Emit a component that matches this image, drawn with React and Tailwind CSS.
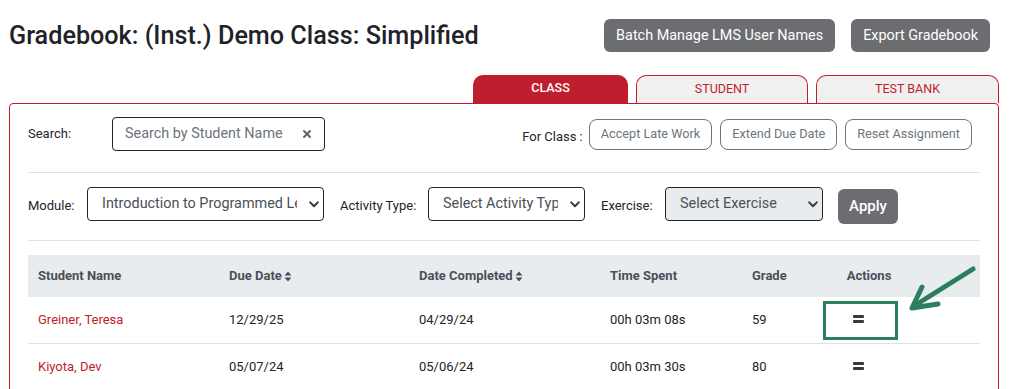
import { X } from "lucide-react";

const Chevron = () => (
  <svg width="10" height="7" viewBox="0 0 10 7" className="shrink-0">
    <path d="M1.2 1.4 L5 5.2 L8.8 1.4" fill="none" stroke="#343a40" strokeWidth="2" strokeLinecap="round" strokeLinejoin="round" />
  </svg>
);

const SortIcon = () => (
  <svg width="8" height="11" viewBox="0 0 8 11" className="ml-[2px] inline-block">
    <path d="M4 0.5 L7.5 4.5 H0.5 Z" fill="#495057" />
    <path d="M4 10.5 L7.5 6.5 H0.5 Z" fill="#495057" />
  </svg>
);

const MenuIcon = () => (
  <div className="flex flex-col gap-[2px]">
    <div className="w-[11px] h-[3px] bg-[#343a40] rounded-[1px]"></div>
    <div className="w-[11px] h-[3px] bg-[#343a40] rounded-[1px]"></div>
  </div>
);

const FakeSelect = ({ text, width, grey }) => (
  <div
    className={`h-[34px] ${width} ${grey ? "bg-[#e9ecef]" : "bg-white"} border border-[#212529] rounded-[4px] flex items-center pl-[14px] pr-[4px] gap-[12px]`}
  >
    <span className="flex-1 overflow-hidden whitespace-nowrap text-[14.4px] text-[#495057]">{text}</span>
    <Chevron />
  </div>
);

const OutlineButton = ({ children }) => (
  <button className="h-[31px] px-[11px] border border-[#6c757d] rounded-[8px] text-[12.7px] text-[#6c757d] bg-white">
    {children}
  </button>
);

const rows = [
  { name: "Greiner, Teresa", due: "12/29/25", done: "04/29/24", time: "00h 03m 08s", grade: "59", boxed: true },
  { name: "Kiyota, Dev", due: "05/07/24", done: "05/06/24", time: "00h 03m 30s", grade: "80" },
];

const cols = "grid grid-cols-[191px_190px_191px_142px_78px_98px_1fr]";

export default function App() {
  return (
    <div className="relative w-[1012px] h-[389px] overflow-hidden bg-white font-['Roboto',sans-serif] text-[#212529]">

      {/* Header */}
      <div className="flex items-center justify-between pl-[9px] pr-[22px] pt-[19px]">
        <h1 className="text-[25.2px] font-medium text-[#1f2329] leading-none">
          Gradebook: (Inst.) Demo Class: Simplified
        </h1>
        <div className="flex gap-[16px]">
          <button className="h-[33px] px-[12px] bg-[#6c6d70] text-white text-[14.4px] rounded-[6px]">
            Batch Manage LMS User Names
          </button>
          <button className="h-[33px] px-[12px] bg-[#6c6d70] text-white text-[14.4px] rounded-[6px]">
            Export Gradebook
          </button>
        </div>
      </div>

      {/* Tabs */}
      <div className="mt-[23px] w-[990px] ml-[9px] flex justify-end gap-[8px]">
        <div className="w-[155px] h-[28px] bg-[#be1e2d] rounded-t-[10px] flex items-center justify-center pb-[1px] text-[12.5px] text-white font-medium">
          CLASS
        </div>
        <div className="w-[172px] h-[28px] bg-[#f0f0f0] border border-b-0 border-[#be1e2d] rounded-t-[10px] flex items-center justify-center pb-[1px] text-[12.5px] text-[#be1e2d]">
          STUDENT
        </div>
        <div className="w-[183px] h-[28px] bg-[#f0f0f0] border border-b-0 border-[#be1e2d] rounded-t-[10px] flex items-center justify-center pb-[1px] text-[12.5px] text-[#be1e2d]">
          TEST BANK
        </div>
      </div>

      {/* Panel */}
      <div className="ml-[9px] w-[990px] border border-[#be1e2d] rounded-t-[4px] px-[18px] pt-[13px] h-[400px]">

        {/* Search row */}
        <div className="flex items-center">
          <span className="w-[84px] text-[13px]">Search:</span>
          <div className="w-[213px] h-[34px] border border-[#212529] rounded-[4px] flex items-center pl-[12px] pr-[11px]">
            <span className="flex-1 text-[14.4px] text-[#6c757d] whitespace-nowrap">Search by Student Name</span>
            <X size={12} strokeWidth={4} color="#5f6368" />
          </div>
          <div className="ml-auto mr-[8px] flex items-center gap-[8px]">
            <span className="text-[13px] mt-[5px] mr-[-2px]">For Class :</span>
            <OutlineButton>Accept Late Work</OutlineButton>
            <OutlineButton>Extend Due Date</OutlineButton>
            <OutlineButton>Reset Assignment</OutlineButton>
          </div>
        </div>

        <div className="mt-[21px] h-px bg-[#dee2e6]"></div>

        {/* Filter row */}
        <div className="mt-[14px] flex items-start">
          <span className="w-[59px] h-[34px] pt-[3px] flex items-center text-[13px]">Module:</span>
          <FakeSelect text="Introduction to Programmed Learning" width="w-[237px]" />
          <span className="ml-[16px] w-[88px] h-[34px] pt-[3px] flex items-center text-[13px] whitespace-nowrap">Activity Type:</span>
          <FakeSelect text="Select Activity Type" width="w-[157px]" />
          <span className="ml-[16px] w-[64px] h-[34px] pt-[3px] flex items-center text-[13px]">Exercise:</span>
          <FakeSelect text="Select Exercise" width="w-[158px]" grey />
          <button className="ml-[15px] mt-[2px] w-[60px] h-[35px] bg-[#6c6d70] text-white text-[15px] font-medium rounded-[6px]">
            Apply
          </button>
        </div>

        <div className="mt-[16px] h-px bg-[#dee2e6]"></div>

        {/* Table */}
        <div className="mt-[14px]">
          <div className={`${cols} h-[42px] items-center bg-[#e9ecef] text-[13px] font-bold text-[#495057]`}>
            <div className="pl-[10px]">Student Name</div>
            <div className="pl-[10px] flex items-center">Due Date<SortIcon /></div>
            <div className="pl-[10px] flex items-center">Date Completed<SortIcon /></div>
            <div className="pl-[10px]">Time Spent</div>
            <div className="pl-[10px]">Grade</div>
            <div className="text-center">Actions</div>
            <div></div>
          </div>
          {rows.map((r, i) => (
            <div key={i} className={`${cols} h-[47px] items-center border-b border-[#dee2e6] text-[13px]`}>
              <div className="pl-[10px] text-[#be1e2d]">{r.name}</div>
              <div className="pl-[10px]">{r.due}</div>
              <div className="pl-[10px]">{r.done}</div>
              <div className="pl-[10px]">{r.time}</div>
              <div className="pl-[10px]">{r.grade}</div>
              <div className="pl-[3px]">
                <div className={`w-[75px] h-[39px] flex items-center justify-center pr-[4px] pb-[2px] ${r.boxed ? "border-[3px] border-[#2a7f5c]" : ""}`}>
                  <MenuIcon />
                </div>
              </div>
              <div></div>
            </div>
          ))}
        </div>
      </div>

      {/* Annotation arrow */}
      <svg className="absolute left-[900px] top-[258px]" width="90" height="60" viewBox="0 0 90 60">
        <g fill="none" stroke="#2a7f5c" strokeWidth="5" strokeLinecap="round" strokeLinejoin="round">
          <path d="M73 11 L14 48" />
          <path d="M22 29 L12 50 L38 46" />
        </g>
      </svg>
    </div>
  );
}
